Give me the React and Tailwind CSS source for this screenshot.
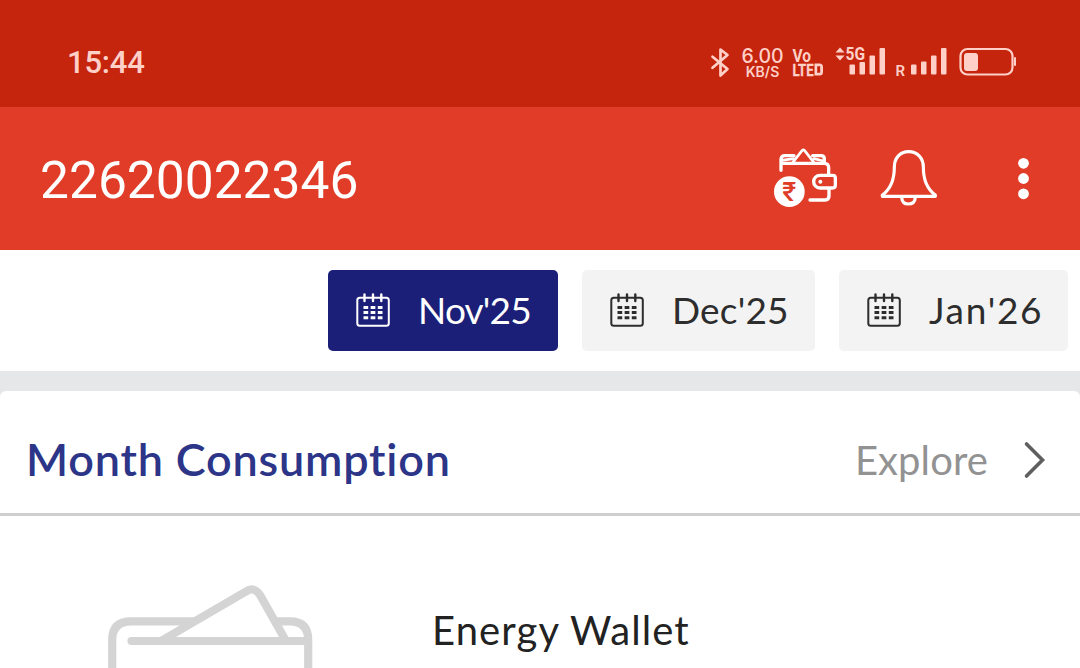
import React from 'react';

const months = [
  { label: "Nov'25", active: true, width: 'w-[230px]', spacing: 'tracking-[-0.8px]' },
  { label: "Dec'25", active: false, width: 'w-[233px]', spacing: 'tracking-[0.2px]' },
  { label: "Jan'26", active: false, width: 'w-[229px]', spacing: 'tracking-[1.7px]' },
];

const BluetoothIcon = () => (
  <svg width="20" height="32" viewBox="0 0 20 32" fill="none" stroke="currentColor" strokeWidth="2.7" strokeLinejoin="round" strokeLinecap="round">
    <path d="M2.500 9.700 17.500 22 10.500 28.500V2.500L17.500 8 2.500 20.800" />
  </svg>
);

const VolteIcon = () => (
  <svg width="34" height="32" viewBox="0 0 34 32" fill="currentColor" fontFamily="Roboto, sans-serif" fontWeight="700">
    <text x="0.500" y="14.500" fontSize="18" textLength="18.500" lengthAdjust="spacingAndGlyphs">Vo</text>
    <text x="0.500" y="28.500" fontSize="17" textLength="21" lengthAdjust="spacingAndGlyphs" stroke="currentColor" strokeWidth="0.400">LTE</text>
    <path d="M22.500 16.500h5q3.500 0 3.500 3.500v5q0 3.500-3.500 3.500h-5zM25.200 19.200v6.600h3v-6.600z" fillRule="evenodd" />
  </svg>
);

const MobileSignal = () => (
  <svg width="52" height="32" viewBox="0 0 52 32" fill="currentColor">
    <path d="M5 1.500 9.500 6.500H.5zM5 14.500.5 9.500h9z" />
    <text x="10.500" y="14" fontSize="18" fontWeight="700" fontFamily="Roboto, sans-serif" textLength="19.500" lengthAdjust="spacingAndGlyphs">5G</text>
    <rect x="14.500" y="18.500" width="5.500" height="10" rx="1" />
    <rect x="24.500" y="16" width="5.500" height="12.500" rx="1" />
    <rect x="34.500" y="9.500" width="5.500" height="19" rx="1" />
    <rect x="44.500" y="2" width="5.500" height="26.500" rx="1" />
  </svg>
);

const RoamingSignal = () => (
  <svg width="52" height="32" viewBox="0 0 52 32" fill="currentColor">
    <text x="-0.500" y="29.500" fontSize="15" fontWeight="600" fontFamily="Roboto, sans-serif">R</text>
    <rect x="15" y="18.500" width="5.500" height="10" rx="1" />
    <rect x="25" y="15.500" width="5.500" height="13" rx="1" />
    <rect x="35" y="9.500" width="5.500" height="19" rx="1" />
    <rect x="45" y="2" width="5.500" height="26.500" rx="1" />
  </svg>
);

const BatteryIcon = () => (
  <svg width="58" height="30" viewBox="0 0 58 30" fill="none">
    <rect x="1.500" y="2" width="52" height="25.500" rx="7" stroke="currentColor" strokeWidth="2.200" />
    <rect x="5" y="6" width="14" height="18" rx="3" fill="currentColor" />
    <rect x="55" y="10" width="2" height="9" rx="1" fill="currentColor" />
  </svg>
);

const RechargeIcon = () => (
  <svg width="68" height="62" viewBox="36 36 204 186" fill="none" stroke="currentColor" strokeWidth="10" strokeLinecap="round" strokeLinejoin="round">
    <path d="M63 106V74q0-12 12-12h27M158 62h25q10 0 10 10v12" />
    <path d="M66 85h127q13 0 13 13v21M207 161v22q0 12-12 12h-45" />
    <path d="M98 83 126 47q4-4 8 0l28 36M66 76l34-5M162 71l28 7" strokeWidth="8" />
    <path d="M180 121h38q8 0 8 8v22q0 8-8 8h-38a19 19 0 0 1 0-38z" />
    <circle cx="181" cy="140" r="6" fill="currentColor" stroke="none" />
    <circle cx="88" cy="170" r="46" fill="currentColor" stroke="none" />
    <text x="88" y="199" textAnchor="middle" fontSize="80" fontWeight="500" fontFamily="Roboto, 'Noto Sans', sans-serif" fill="#e03c27" stroke="none">₹</text>
  </svg>
);

const BellIcon = () => (
  <svg width="58" height="58" viewBox="360 42 174 174" fill="none" stroke="currentColor" strokeWidth="9.500" strokeLinecap="round" strokeLinejoin="round">
    <path d="M446 50C419 50 403 70 403 96C403 139 391 163 367 180V184H526V180C502 163 490 139 490 96C490 70 473 50 446 50Z" />
    <path d="M425 187C426 201 434 207 445 207S465 201 466 187" />
  </svg>
);

const MenuDots = () => (
  <svg width="12" height="44" viewBox="0 0 12 44" fill="currentColor">
    <circle cx="6.500" cy="6.300" r="5.400" />
    <circle cx="6.500" cy="21.500" r="5.400" />
    <circle cx="6.500" cy="36.800" r="5.400" />
  </svg>
);

const CalendarIcon = () => (
  <svg width="34" height="35" viewBox="0 0 34 35" fill="none" stroke="currentColor">
    <rect x="1.300" y="4.800" width="31.500" height="28" rx="2.500" strokeWidth="2" />
    <path d="M8.500 1.500v6.500M17 1.500v6.500M25.300 1.500v6.500" strokeWidth="2.400" strokeLinecap="round" />
    <path d="M7.500 14.500h19M7.500 19.500h19M7.500 24.700h19" strokeWidth="3" strokeDasharray="4.700 2.450" />
  </svg>
);

const EnergyWalletArt = () => (
  <svg width="210" height="90" viewBox="0 0 210 90" fill="none" stroke="#d4d4d4" strokeWidth="8.200" strokeLinecap="round" strokeLinejoin="round">
    <path d="M5.200 90V57Q5.200 38.300 24 38.300H88M170 38.300H183Q201.200 38.300 201.200 57V90" strokeLinecap="butt" />
    <path d="M24.500 58H199" />
    <path d="M54 58 139 8.500Q147 3 153 12L179 58" strokeLinecap="butt" />
  </svg>
);

const App = () => {
  return (
    <div className="flex h-[668px] w-[1080px] flex-col overflow-hidden bg-white font-['Lato',sans-serif]">
      <div className="flex h-[107px] shrink-0 items-start bg-[#c5240d] pl-[67px] text-[#ffd0c8]">
        <div className="mt-[43px] w-[643px] font-['Roboto',sans-serif] text-[31px] leading-[40px] font-medium tracking-[-0.2px]">15:44</div>
        <div className="mt-[47px] w-[31px]"><BluetoothIcon /></div>
        <div className="mt-[46px] w-[51px] font-['Inter',sans-serif] font-medium">
          <div className="w-[43px] text-center text-[19.500px] leading-[20px]">6.00</div>
          <div className="w-[43px] text-center text-[14px] leading-[12px] font-semibold">KB/S</div>
        </div>
        <div className="mt-[47px] w-[43px]"><VolteIcon /></div>
        <div className="mt-[46px] w-[61px]"><MobileSignal /></div>
        <div className="mt-[46px] w-[63px]"><RoamingSignal /></div>
        <div className="mt-[47px]"><BatteryIcon /></div>
      </div>

      <div className="flex h-[143px] shrink-0 items-start bg-[#e03c27] pl-[40px] text-white">
        <h1 className="mt-[44px] w-[732px] font-['Roboto',sans-serif] text-[51.500px] leading-[60px]">22620022346</h1>
        <button className="mt-[40px] w-[108px]"><RechargeIcon /></button>
        <button className="mt-[42px] w-[137px]"><BellIcon /></button>
        <button className="mt-[50px]"><MenuDots /></button>
      </div>

      <div className="flex h-[121px] shrink-0 items-center justify-end gap-6 pr-3">
        {months.map(m => (
          <button
            key={m.label}
            className={`flex h-[81px] items-center rounded-[5px] pl-7 ${m.width} ${m.active ? 'bg-[#1b1f77] text-white' : 'bg-[#f3f3f3] text-[#2d2d2d]'}`}
          >
            <CalendarIcon />
            <span className={`-mt-[3px] ml-7 whitespace-nowrap text-[37px] leading-none ${m.spacing}`}>{m.label}</span>
          </button>
        ))}
      </div>

      <div className="h-[297px] shrink-0 bg-[#e6e7e9] pt-5">
        <div className="h-full rounded-t-[6px] bg-white">
          <div className="flex h-[125px] items-center border-b-[3px] border-[#cfcfcf] pr-[34px] pl-[26px] pt-[16px]">
            <h2 className="-mt-[2px] flex-1 whitespace-nowrap text-[45px] leading-[56px] font-semibold tracking-[0.8px] text-[#2c3587]">Month Consumption</h2>
            <span className="text-[40px] leading-[50px] tracking-[0.1px] text-[#929292]">Explore</span>
            <svg className="ml-[34px]" width="24" height="38" viewBox="0 0 24 38" fill="none" stroke="#5f5f5f" strokeWidth="3.600" strokeLinecap="round">
              <path d="M4.500 3 20.500 19 4.500 35" />
            </svg>
          </div>
          <div className="flex items-start pl-[107px]">
            <div className="mt-[67px] w-[325px]"><EnergyWalletArt /></div>
            <div className="mt-[89px] text-[40px] leading-[50px] tracking-[1.100px] text-[#222]">Energy Wallet</div>
          </div>
        </div>
      </div>
    </div>
  );
};

export default App;
